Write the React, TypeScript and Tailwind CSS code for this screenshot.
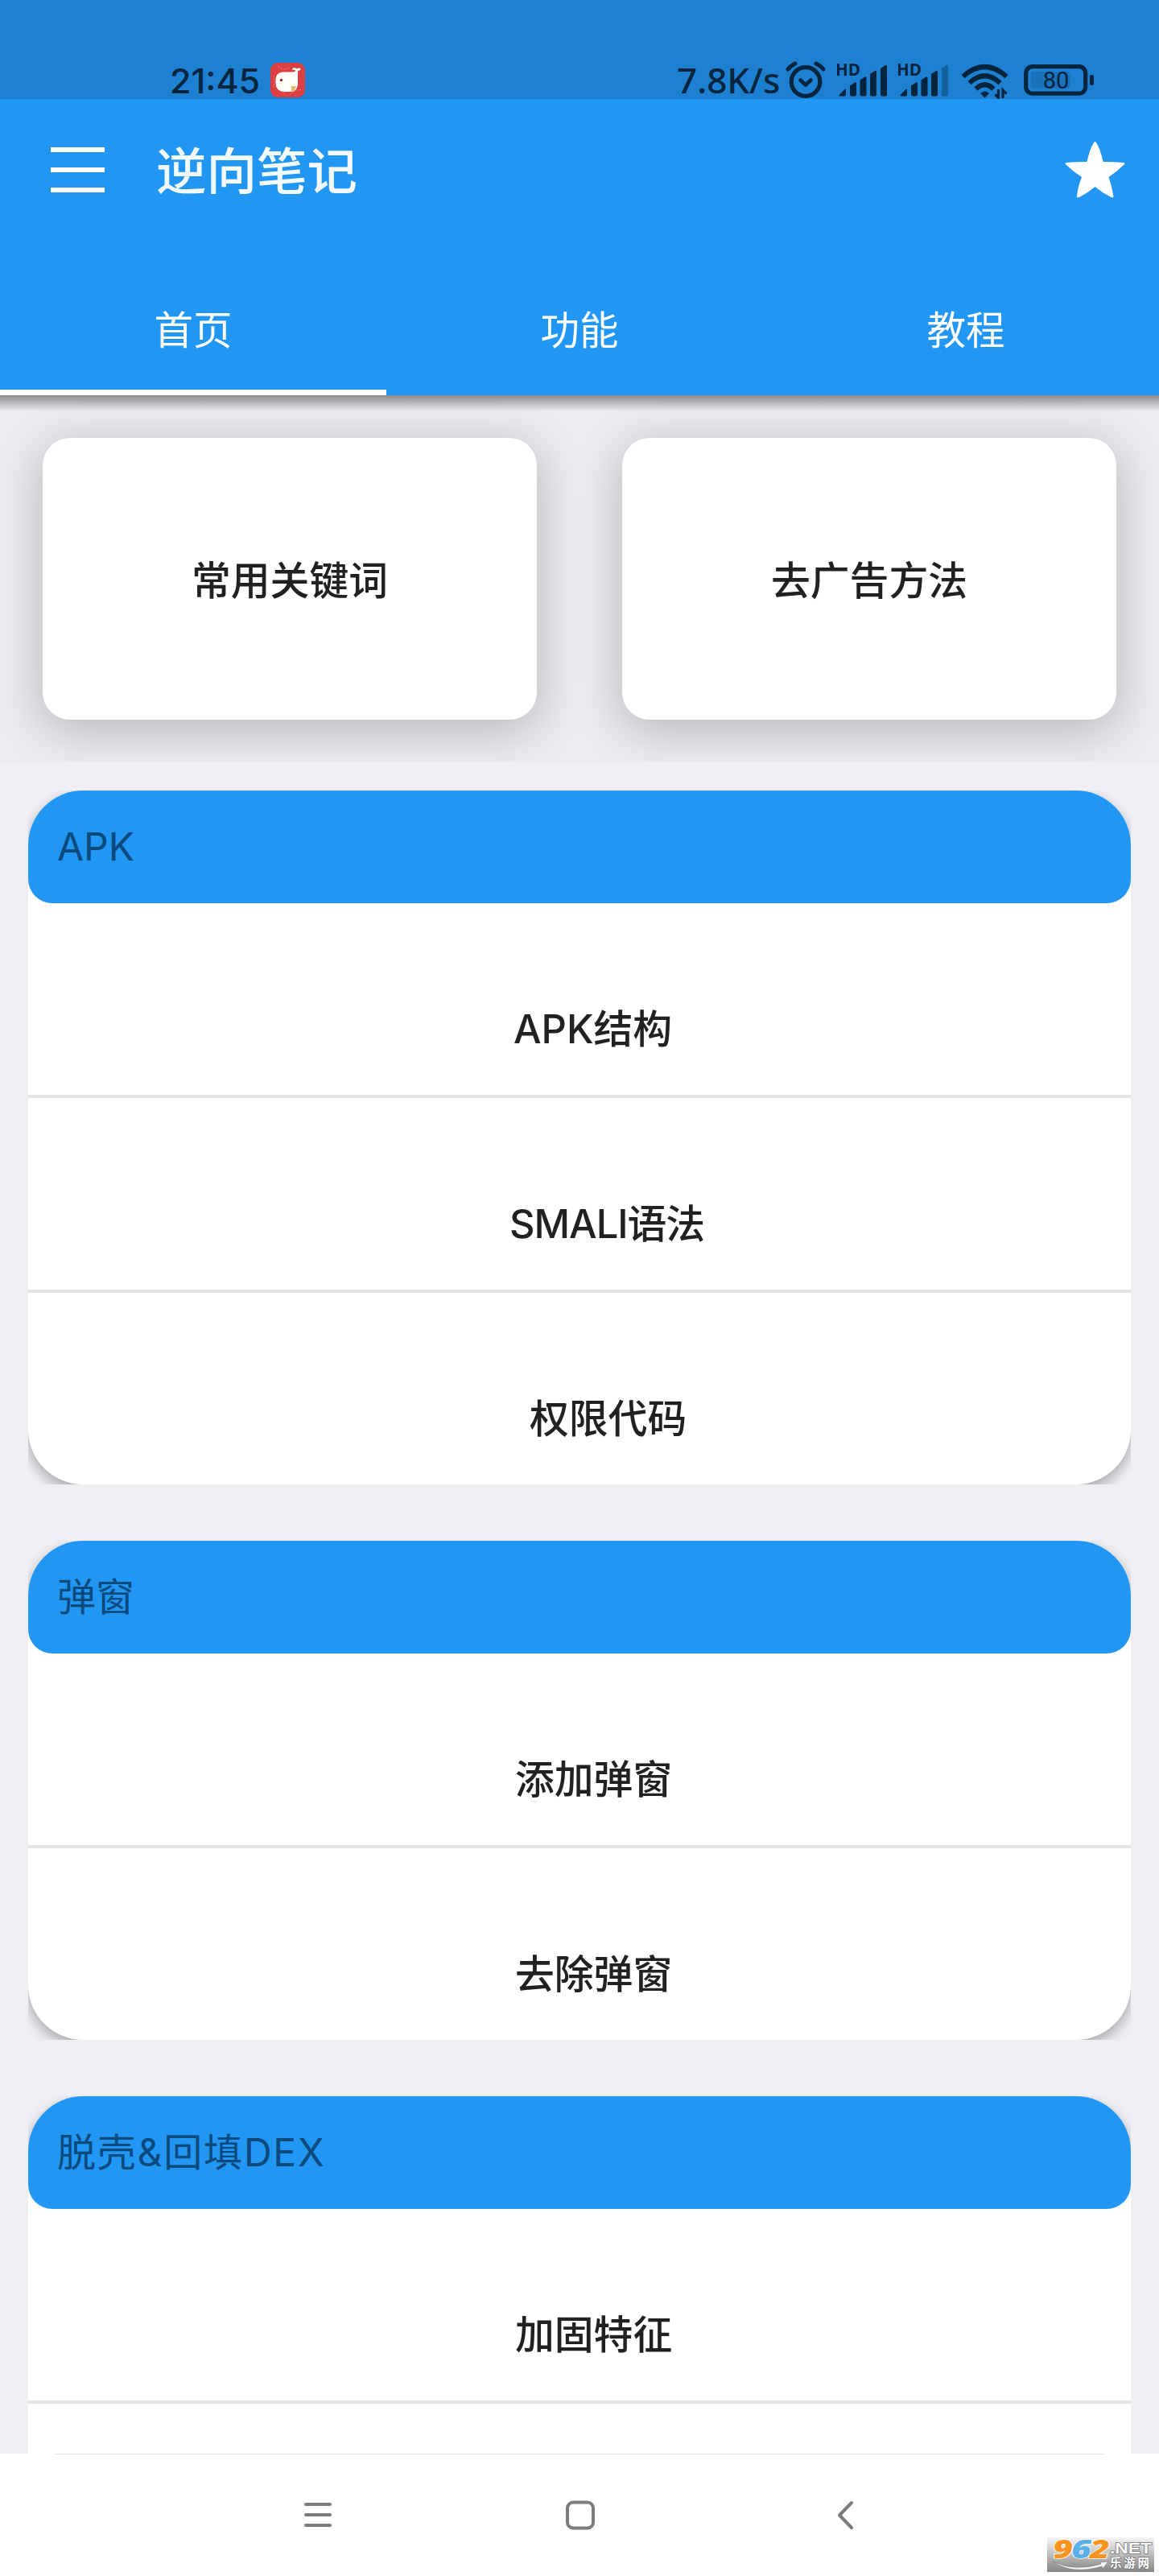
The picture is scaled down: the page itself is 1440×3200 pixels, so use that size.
import type { ReactNode } from "react";

const tabs = ["首页", "功能", "教程"];

const shortcuts = ["常用关键词", "去广告方法"];

type SectionProps = {
    title: string;
    titleClass?: string;
    children: ReactNode;
}

const Section = ({ title, titleClass = "", children }: SectionProps) => {
    return (
        <section className="shrink-0 overflow-hidden">
            <div className="rounded-[68px] bg-white shadow-[0_7px_16px_rgba(0,0,0,0.3)]">
                <h2 className={`flex h-[140px] items-center rounded-t-[68px] rounded-b-[30px] bg-[#2296f3] pl-9 text-[48px] text-[#0a4a7c] ${titleClass}`}>
                    {title}
                </h2>
                <ul className="divide-y-4 divide-[#e4e4e4]">{children}</ul>
            </div>
        </section>
    )
};

type RowProps = {
    label: string;
    indent?: string;
}

const Row = ({ label, indent = "pl-[605px]" }: RowProps) => {
    return (
        <li className={`box-content flex h-[238px] items-center ${indent}`}>
            <span className="mt-[76px] text-[48.8px] font-medium whitespace-nowrap text-[#212121]">{label}</span>
        </li>
    )
};

const WhaleIcon = () => (
    <svg className="h-[43px] w-[43px]" viewBox="0 0 43 43">
        <rect width="43" height="43" rx="9" fill="#dc3f41" />
        <path d="M3 30q8-3 14 9M4 16q2 6 0 12M24 40q8-8 15-6M10 5q8 5 14 1" fill="none" stroke="#ee9a92" strokeDasharray="1.5 2" />
        <path d="M15 11.500h11q3.500 0 5-1v-1.500q-4 .5-4-1.500 1-2 4-1 1.500 .5 2 1 .5-1 2-1 3-.5 2.500 1.500-.5 2-3 2-.5 0-.5 3v13q0 9.500-9 10h-8q-10-.5-10.500-10v-5q0-8.500 8.500-9.500z" fill="#fffdf8" />
        <path d="M26 36v-7h6q-1 6-6 7z" fill="#e9b66d" />
        <circle cx="13.500" cy="21.500" r="1.700" fill="#8c2024" />
    </svg>
);

const AlarmIcon = () => (
    <svg className="h-[46px] w-[50px]" viewBox="0 0 50 46" fill="none" stroke="#05243d" strokeWidth="4.600" strokeLinecap="round">
        <circle cx="25" cy="25.500" r="17.800" strokeWidth="5.200" />
        <path d="M3 10Q6 6 12 3M47 10Q44 6 38 3" strokeWidth="5" />
        <path d="M18.500 23.500l6.500 6 6.500-6" strokeLinejoin="round" />
    </svg>
);

const SignalIcon = ({ weak = false }: { weak?: boolean }) => (
    <svg className="h-[52px] w-[64px]" viewBox="0 -10 64 52" fill="#05243d">
        <text x="-2" y="15" fontSize="21" fontWeight="700" fontFamily="Open Sans, sans-serif" textLength="31" lengthAdjust="spacingAndGlyphs">HD</text>
        <path d="M3 38.500l6.500-6.500q1.500-1 1.500 1v5.500q0 2-2 2H4q-2 0-1-2z" />
        <path d="M16 27.500l6-4q2-1 2 1.500v13.500q0 2-2 2h-4q-2 0-2-2z" />
        <path d="M28.500 20.500l6-4q2-1 2 1.500v20.500q0 2-2 2h-4q-2 0-2-2z" />
        <path d="M41 13l6-4q2-1 2 1.500v28q0 2-2 2h-4q-2 0-2-2z" />
        <path d="M54 6l6-4q2-1 2 1.500v35q0 2-2 2h-4q-2 0-2-2z" opacity={weak ? 0.35 : 1} />
    </svg>
);

const WifiIcon = () => (
    <svg className="h-[44px] w-[60px]" viewBox="0 0 60 44" fill="none" stroke="#05243d" strokeWidth="6">
        <path d="M2.500 16Q29.500-8 56.500 16" />
        <path d="M10.500 24Q29.500 6.500 48.500 24" />
        <path d="M18.500 31.500Q29.500 21 40.500 31.500" />
        <path d="M24 37q6-5 11 0l-5.500 5.500z" fill="#05243d" stroke="none" />
        <path d="M46.500 32v10.500l-4-4M52 43V33l4.500 4.500" strokeWidth="3.200" />
    </svg>
);

const BatteryIcon = () => (
    <svg className="h-[39px] w-[88px]" viewBox="0 0 88 39">
        <rect x="2.700" y="2.700" width="74" height="33.500" rx="8" fill="none" stroke="#05243d" strokeWidth="5.200" />
        <rect x="9" y="9" width="49" height="20.500" rx="4" fill="#1a72ba" />
        <text x="40" y="30" textAnchor="middle" fontSize="29" fontFamily="Roboto, sans-serif" fill="#05243d">80</text>
        <rect x="82" y="13" width="5" height="13" rx="2" fill="#05243d" />
    </svg>
);

const SiteBadge = () => (
    <svg className="h-[43px] w-[133px]" viewBox="0 0 133 43">
        <defs>
            <linearGradient id="badge" x1="0" y1="0" x2="0" y2="1">
                <stop offset="0" stopColor="#f6f6f6" />
                <stop offset="1" stopColor="#858585" />
            </linearGradient>
        </defs>
        <rect width="133" height="43" fill="url(#badge)" />
        <g fontFamily="Open Sans, sans-serif" fontWeight="800" fontStyle="italic" fontSize="32" stroke="#fff" strokeWidth="1.500" paintOrder="stroke">
            <text x="7" y="26" textLength="25" lengthAdjust="spacingAndGlyphs" fill="#f79420">9</text>
            <text x="30" y="26" textLength="25" lengthAdjust="spacingAndGlyphs" fill="#5bb0e8">6</text>
            <text x="53" y="26" textLength="25" lengthAdjust="spacingAndGlyphs" fill="#f79420">2</text>
        </g>
        <path d="M7 30q27 13 60 3l-2-2 11-1-7 9-1-3Q31 47 7 30z" fill="#f4f4f4" stroke="#777" strokeWidth="0.600" />
        <g fill="#fff" stroke="#747474" strokeWidth="1.400" paintOrder="stroke" fontWeight="700">
            <text x="78" y="20" fontSize="18" fontFamily="Liberation Sans, sans-serif" textLength="52" lengthAdjust="spacingAndGlyphs">.NET</text>
            <text x="78" y="37" fontSize="14.500" fontFamily="Noto Sans CJK SC, sans-serif" textLength="49">乐游网</text>
        </g>
    </svg>
);

const StatusBar = () => {
    return (
        <div className="flex h-[123px] shrink-0 items-end bg-[#1d80d0] pr-[80px] pl-[211px] text-[#05243d]">
            <span className="-mb-[7px] w-[125px] text-[43px] leading-[60px] font-medium">21:45</span>
            <div className="mb-0.5"><WhaleIcon /></div>
            <div className="ml-auto flex items-end">
                <span className="-mb-1.5 w-[135px] font-['Noto_Sans'] text-[44px] leading-[60px] font-medium whitespace-nowrap">7.8K/s</span>
                <div className="mb-[1px]"><AlarmIcon /></div>
                <div className="mb-0.5 ml-3.5"><SignalIcon /></div>
                <div className="mb-0.5 ml-3"><SignalIcon weak /></div>
                <div className="ml-[14px]"><WifiIcon /></div>
                <div className="mb-1 ml-[18px]"><BatteryIcon /></div>
            </div>
        </div>
    )
};

const AppBar = () => {
    return (
        <header className="relative z-10 h-[368px] shrink-0 bg-[#2296f3] text-white">
            <div className="flex h-[176px] items-center pr-[42px] pl-[63px]">
                <div className="flex h-[56px] w-[67px] flex-col justify-between">
                    <span className="h-1.5 bg-white" />
                    <span className="h-1.5 bg-white" />
                    <span className="h-1.5 bg-white" />
                </div>
                <h1 className="mt-1 ml-[64px] text-[62.5px] leading-none font-medium text-[#f2f9ff]">逆向笔记</h1>
                <svg className="ml-auto h-[70px] w-[75px]" viewBox="0 0 75 70" fill="#fff">
                    <path d="M35.500 2q2-4 4 0Q44 9 47.500 25q13 0 25.500 1 3 1 0 3Q65 37 54.500 44q4 12 6 24 0 2-3 1Q47 64 37.500 56 28 64 18 69q-4 1-3-1 1-12 6-24Q10 37 2 29q-3-2 0-3 13-1 25.500-1Q31 9 35.500 2z" />
                </svg>
            </div>
            <nav className="grid h-[192px] grid-cols-3">
                {tabs.map((tab, i) => (
                    <div key={tab} className={`flex items-center justify-center border-b-[7px] pt-10 text-[48.5px] ${i === 0 ? "border-white" : "border-transparent"}`}>
                        {tab}
                    </div>
                ))}
            </nav>
            <div className="absolute inset-x-0 top-full h-5 bg-linear-to-b from-black/40 to-transparent" />
        </header>
    )
};

export default function App() {
    return (
        <div className="flex h-[3200px] w-[1440px] flex-col overflow-hidden bg-[#efeef3] font-[Inter,'Noto_Sans_CJK_SC',sans-serif]">
            <StatusBar />
            <AppBar />
            <main className="min-h-0 flex-1 overflow-hidden">
                <div className="grid h-[456px] grid-cols-2 gap-[106px] overflow-hidden bg-[#ecebf0] px-[53px] pt-[53px] pb-[53px]">
                    {shortcuts.map((name) => (
                        <div key={name} className="flex items-center justify-center rounded-[34px] bg-white pt-1.5 text-[48.8px] font-medium text-[#212121] shadow-[0_12px_58px_rgba(0,0,0,0.24)]">
                            {name}
                        </div>
                    ))}
                </div>
                <div className="flex flex-col gap-[70px] px-[35px] pt-[35px]">
                    <Section title="APK">
                        <Row label="APK结构" indent="pl-[603px]" />
                        <Row label="SMALI语法" indent="pl-[598px] tracking-[-1px]" />
                        <Row label="权限代码" indent="pl-[623px]" />
                    </Section>
                    <Section title="弹窗">
                        <Row label="添加弹窗" />
                        <Row label="去除弹窗" />
                    </Section>
                    <Section title="脱壳&回填DEX" titleClass="tracking-[1.8px]">
                        <Row label="加固特征" />
                        <Row label="" />
                    </Section>
                </div>
            </main>
            <footer className="flex h-[152px] shrink-0 flex-col bg-white">
                <div className="mx-[68px] h-px bg-[#e4e4e4]" />
                <div className="flex h-[151px] items-center pl-[377px]">
                    <svg className="h-[40px] w-[684px]" viewBox="0 0 684 40" fill="none" stroke="#7b7b7b" strokeWidth="4" strokeLinecap="round">
                        <path d="M3 6h30M3 19h30M3 32h30" />
                        <rect x="328" y="3.500" width="32" height="32" rx="7" />
                        <path d="M681 4l-15 15.500 15 15.500" strokeLinejoin="round" />
                    </svg>
                    <div className="mt-[97px] mr-1.5 ml-auto"><SiteBadge /></div>
                </div>
            </footer>
        </div>
    );
}
